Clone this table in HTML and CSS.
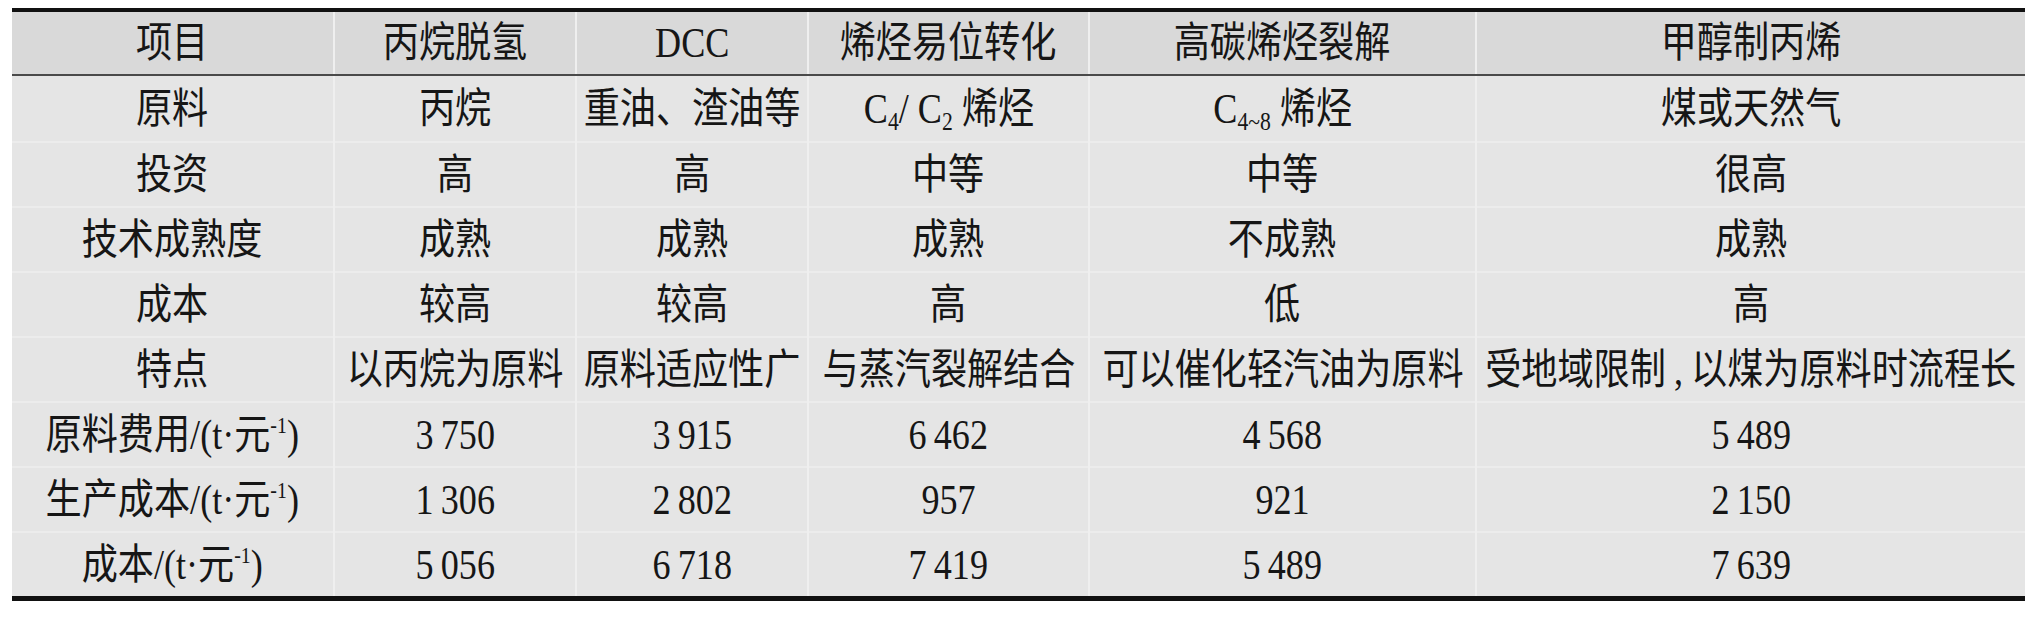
FILE: index.html
```html
<!DOCTYPE html>
<html lang="zh-CN">
<head>
<meta charset="utf-8">
<title>丙烯生产工艺比较</title>
<link rel="stylesheet" href="styles.css">
</head>
<body>
<div class="page">
  <table class="cmp">
    <colgroup>
      <col class="c1"><col class="c2"><col class="c3"><col class="c4"><col class="c5"><col class="c6">
    </colgroup>
    <thead>
      <tr>
        <th><div class="cell"><span class="t">项目</span></div></th>
        <th><div class="cell"><span class="t">丙烷脱氢</span></div></th>
        <th><div class="cell"><span class="t">DCC</span></div></th>
        <th><div class="cell"><span class="t">烯烃易位转化</span></div></th>
        <th><div class="cell"><span class="t">高碳烯烃裂解</span></div></th>
        <th><div class="cell"><span class="t">甲醇制丙烯</span></div></th>
      </tr>
    </thead>
    <tbody>
      <tr>
        <td><div class="cell"><span class="t">原料</span></div></td>
        <td><div class="cell"><span class="t">丙烷</span></div></td>
        <td><div class="cell"><span class="t">重油、渣油等</span></div></td>
        <td><div class="cell"><span class="t">C<span class="sb">4</span>/ C<span class="sb">2</span> 烯烃</span></div></td>
        <td><div class="cell"><span class="t">C<span class="sb">4~8</span> 烯烃</span></div></td>
        <td><div class="cell"><span class="t">煤或天然气</span></div></td>
      </tr>
      <tr>
        <td><div class="cell"><span class="t">投资</span></div></td>
        <td><div class="cell"><span class="t">高</span></div></td>
        <td><div class="cell"><span class="t">高</span></div></td>
        <td><div class="cell"><span class="t">中等</span></div></td>
        <td><div class="cell"><span class="t">中等</span></div></td>
        <td><div class="cell"><span class="t">很高</span></div></td>
      </tr>
      <tr>
        <td><div class="cell"><span class="t">技术成熟度</span></div></td>
        <td><div class="cell"><span class="t">成熟</span></div></td>
        <td><div class="cell"><span class="t">成熟</span></div></td>
        <td><div class="cell"><span class="t">成熟</span></div></td>
        <td><div class="cell"><span class="t">不成熟</span></div></td>
        <td><div class="cell"><span class="t">成熟</span></div></td>
      </tr>
      <tr>
        <td><div class="cell"><span class="t">成本</span></div></td>
        <td><div class="cell"><span class="t">较高</span></div></td>
        <td><div class="cell"><span class="t">较高</span></div></td>
        <td><div class="cell"><span class="t">高</span></div></td>
        <td><div class="cell"><span class="t">低</span></div></td>
        <td><div class="cell"><span class="t">高</span></div></td>
      </tr>
      <tr>
        <td><div class="cell"><span class="t">特点</span></div></td>
        <td><div class="cell"><span class="t">以丙烷为原料</span></div></td>
        <td><div class="cell"><span class="t">原料适应性广</span></div></td>
        <td><div class="cell"><span class="t">与蒸汽裂解结合</span></div></td>
        <td><div class="cell"><span class="t">可以催化轻汽油为原料</span></div></td>
        <td><div class="cell"><span class="t">受地域限制<span class="cm">,</span>以煤为原料时流程长</span></div></td>
      </tr>
      <tr>
        <td><div class="cell"><span class="t">原料费用/(t·元<span class="sp">-1</span>)</span></div></td>
        <td><div class="cell"><span class="t">3&#8201;750</span></div></td>
        <td><div class="cell"><span class="t">3&#8201;915</span></div></td>
        <td><div class="cell"><span class="t">6&#8201;462</span></div></td>
        <td><div class="cell"><span class="t">4&#8201;568</span></div></td>
        <td><div class="cell"><span class="t">5&#8201;489</span></div></td>
      </tr>
      <tr>
        <td><div class="cell"><span class="t">生产成本/(t·元<span class="sp">-1</span>)</span></div></td>
        <td><div class="cell"><span class="t">1&#8201;306</span></div></td>
        <td><div class="cell"><span class="t">2&#8201;802</span></div></td>
        <td><div class="cell"><span class="t">957</span></div></td>
        <td><div class="cell"><span class="t">921</span></div></td>
        <td><div class="cell"><span class="t">2&#8201;150</span></div></td>
      </tr>
      <tr>
        <td><div class="cell"><span class="t">成本/(t·元<span class="sp">-1</span>)</span></div></td>
        <td><div class="cell"><span class="t">5&#8201;056</span></div></td>
        <td><div class="cell"><span class="t">6&#8201;718</span></div></td>
        <td><div class="cell"><span class="t">7&#8201;419</span></div></td>
        <td><div class="cell"><span class="t">5&#8201;489</span></div></td>
        <td><div class="cell"><span class="t">7&#8201;639</span></div></td>
      </tr>
    </tbody>
  </table>
</div>
</body>
</html>
```

FILE: styles.css
```css
html, body {
  margin: 0;
  padding: 0;
  background: #ffffff;
}

.page {
  padding: 8px 0 0 12px;
}

.cmp {
  width: 2013px;
  table-layout: fixed;
  border-collapse: collapse;
  border-top: 4px solid #111111;
  border-bottom: 5px solid #111111;
  font-family: "Liberation Serif", "Noto Sans CJK SC", serif;
  font-size: 42px;
  font-weight: 400;
  color: #161616;
}

.c1 { width: 322px; }
.c2 { width: 242px; }
.c3 { width: 232px; }
.c4 { width: 281px; }
.c5 { width: 387px; }
.c6 { width: 549px; }

.cmp th,
.cmp td {
  padding: 0;
  font-weight: 400;
  border-left: 2px solid #efefef;
}

.cmp th:first-child,
.cmp td:first-child {
  border-left: none;
}

.cmp thead th {
  background: #d9d9d9;
  height: 62px;
  border-bottom: 2px solid #4a4a4a;
}

.cmp tbody td {
  background: #e5e5e5;
  height: 63px;
  border-top: 2px solid #ececec;
}

.cmp tbody tr:first-child td {
  border-top: none;
  height: 65px;
}

.cell {
  display: flex;
  justify-content: center;
  align-items: center;
  height: 100%;
  white-space: nowrap;
}

.t {
  display: inline-block;
  line-height: 1;
  transform: scaleX(0.86);
  transform-origin: center center;
}

.sb {
  font-size: 0.6em;
  vertical-align: -0.28em;
  line-height: 0;
}

.sp {
  font-size: 0.55em;
  vertical-align: 0.7em;
  line-height: 0;
}

.cm {
  display: inline-block;
  width: 0.7em;
  text-align: center;
}
```
